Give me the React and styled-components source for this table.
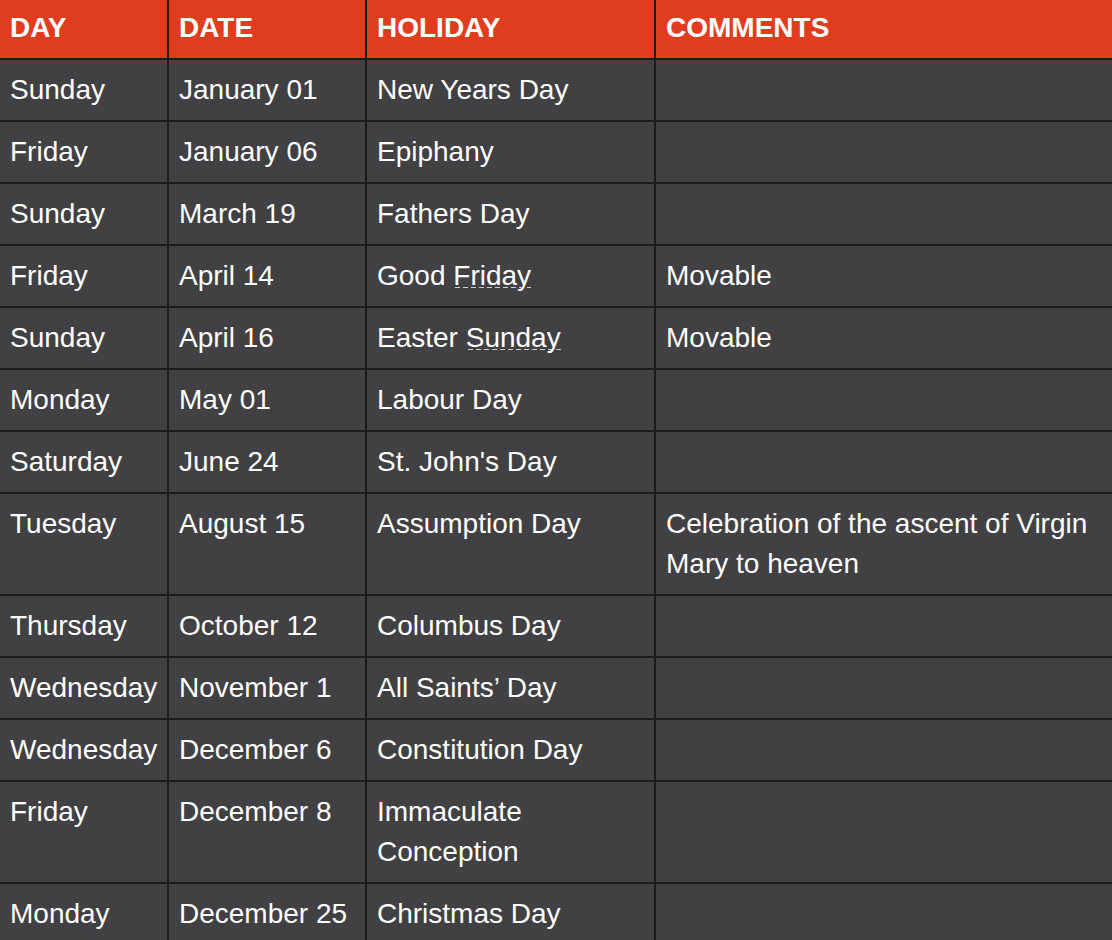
import React from "react";
import styled, { createGlobalStyle } from "styled-components";

const GlobalStyle = createGlobalStyle`
  html, body {
    margin: 0;
    padding: 0;
    background: #414042;
  }
  body {
    font-family: "Liberation Sans", Arial, Helvetica, sans-serif;
  }
`;

const Table = styled.div`
  display: grid;
  grid-template-columns: 169px 198px 289px 1fr;
  width: 1112px;
  background: #414042;
  color: #ffffff;
  font-family: "Liberation Sans", Arial, Helvetica, sans-serif;
  font-size: 28px;
  line-height: 40px;
`;

const Cell = styled.div`
  box-sizing: border-box;
  padding: 10px 10px;
  border-bottom: 2px solid #1c1c1c;
  border-right: ${(p) => (p.$last ? "none" : "2px solid #1c1c1c")};
  background: #414042;
`;

const HeadCell = styled(Cell)`
  background: #e03d1f;
  font-weight: 700;
  padding: 8px 10px 10px;
  text-transform: uppercase;
`;

const Marked = styled.span`
  background-image: repeating-linear-gradient(
    to right,
    #cfcfcf 0,
    #cfcfcf 5px,
    transparent 5px,
    transparent 8px
  );
  background-repeat: no-repeat;
  background-size: 100% 1px;
  background-position: 2px calc(100% - 3px);
`;

const rows = [
  ["Sunday", "January 01", "New Years Day", ""],
  ["Friday", "January 06", "Epiphany", ""],
  ["Sunday", "March 19", "Fathers Day", ""],
  ["Friday", "April 14", ["Good ", "Friday"], "Movable"],
  ["Sunday", "April 16", ["Easter ", "Sunday"], "Movable"],
  ["Monday", "May 01", "Labour Day", ""],
  ["Saturday", "June 24", "St. John's Day", ""],
  ["Tuesday", "August 15", "Assumption Day", "Celebration of the ascent of Virgin Mary to heaven"],
  ["Thursday", "October 12", "Columbus Day", ""],
  ["Wednesday", "November 1", "All Saints\u2019 Day", ""],
  ["Wednesday", "December 6", "Constitution Day", ""],
  ["Friday", "December 8", "Immaculate Conception", ""],
  ["Monday", "December 25", "Christmas Day", ""],
];

const headers = ["Day", "Date", "Holiday", "Comments"];

export default function App() {
  return (
    <>
      <GlobalStyle />
      <Table>
        {headers.map((h, i) => (
          <HeadCell key={h} $last={i === 3}>
            {h}
          </HeadCell>
        ))}
        {rows.map((r, ri) =>
          r.map((c, ci) => (
            <Cell key={`${ri}-${ci}`} $last={ci === 3}>
              {Array.isArray(c) ? (
                <>
                  {c[0]}
                  <Marked>{c[1]}</Marked>
                </>
              ) : (
                c
              )}
            </Cell>
          ))
        )}
      </Table>
    </>
  );
}
